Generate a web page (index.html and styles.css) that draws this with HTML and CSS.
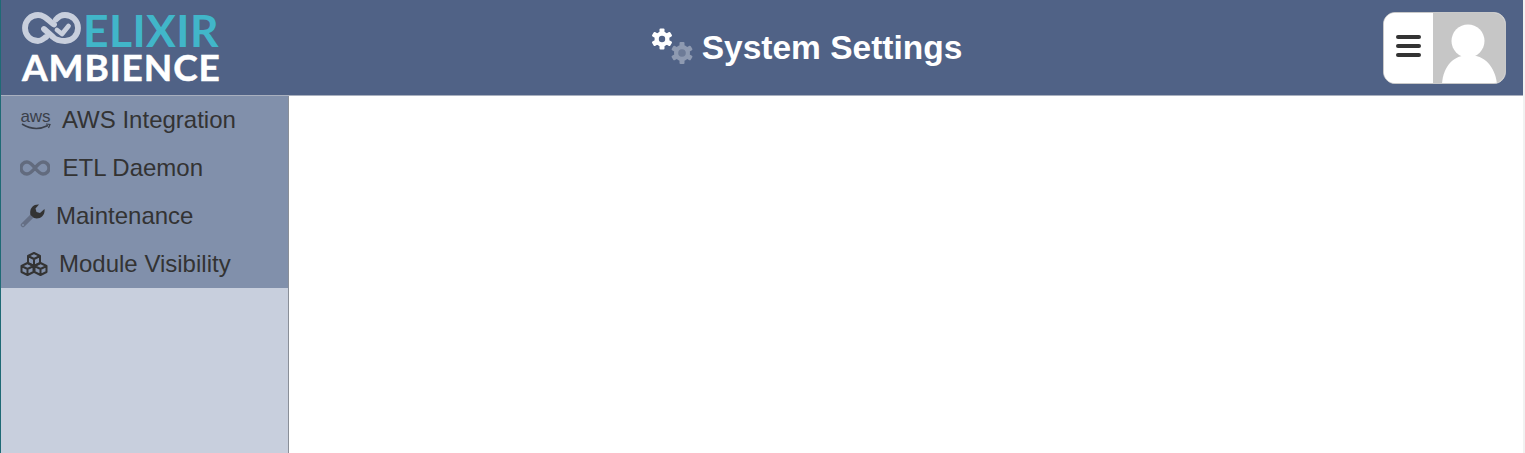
FILE: index.html
```html
<!DOCTYPE html>
<html lang="en">
<head>
<meta charset="utf-8">
<title>System Settings</title>
<link rel="stylesheet" href="styles.css">
</head>
<body>
<div class="app">
  <header class="topbar">
    <div class="logo">
      <div class="logo-top">
        <svg class="logo-mark" viewBox="7 4 60 36" width="60" height="36" aria-hidden="true">
          <g fill="none" stroke="#c8cfdd" stroke-width="5.800" stroke-linecap="round" stroke-linejoin="round">
            <path d="M31 29 C28 31 26 33 23 33 A13 13 0 0 1 23 7 C28 7 31 10 39 16.500"/>
            <path d="M29 21 L38 29 C41 32 44 33 50 33 A13 13 0 0 0 50 7 C46 7 43 9 41 11.500"/>
            <path d="M42 22 L47 26 L53.500 18" stroke-width="4.800"/>
          </g>
        </svg>
        <span class="logo-elixir">ELIXIR</span>
      </div>
      <div class="logo-ambience">AMBIENCE</div>
    </div>
    <h1 class="title">
      <svg class="gears" viewBox="0 0 44 36" width="44" height="36" aria-hidden="true">
        <g class="gear-white"><circle cx="11" cy="11" r="7.500"/><g class="teeth"><rect x="8.500" y="0.500" width="5" height="21" rx="1"/><rect x="8.500" y="0.500" width="5" height="21" rx="1" transform="rotate(60 11 11)"/><rect x="8.500" y="0.500" width="5" height="21" rx="1" transform="rotate(120 11 11)"/></g><circle class="hole-a" cx="11" cy="11" r="3.200"/></g>
        <g class="gear-grey"><circle cx="31" cy="25" r="8"/><g class="teeth"><rect x="28.500" y="14" width="5" height="22" rx="1"/><rect x="28.500" y="14" width="5" height="22" rx="1" transform="rotate(60 31 25)"/><rect x="28.500" y="14" width="5" height="22" rx="1" transform="rotate(120 31 25)"/></g><circle class="hole-b" cx="31" cy="25" r="3.800"/></g>
      </svg>
      <span>System Settings</span>
    </h1>
    <div class="user-box">
      <div class="menu-btn"><span class="bar"></span><span class="bar"></span><span class="bar"></span></div>
      <div class="avatar">
        <svg viewBox="0 0 73 70" width="73" height="70" aria-hidden="true">
          <circle cx="35" cy="28" r="16.500" fill="#fff"/>
          <path d="M9 71 C10 54 20 42 36 42 C52 42 62 54 64 71 Z" fill="#fff"/>
        </svg>
      </div>
    </div>
  </header>
  <div class="main">
    <aside class="sidebar">
      <nav class="nav">
        <a class="nav-item">
          <span class="aws-icon"><span class="aws-text">aws</span>
            <svg viewBox="0 0 30 8" width="30" height="8" aria-hidden="true"><path d="M1 1 Q14 9 27 2.500" fill="none" stroke="#3a3f4a" stroke-width="1.500"/><path d="M25 1 L29 1.500 L27.500 5" fill="none" stroke="#3a3f4a" stroke-width="1.200"/></svg>
          </span>
          <span class="label label-aws">AWS Integration</span>
        </a>
        <a class="nav-item">
          <svg class="icon-inf" viewBox="0 0 30 16" width="30" height="16" aria-hidden="true"><path d="M15 8 C11 3 9 2 7 2 A6 6 0 0 0 7 14 C9 14 11 13 15 8 C19 3 21 2 23 2 A6 6 0 0 1 23 14 C21 14 19 13 15 8 Z" fill="none" stroke="#626b7e" stroke-width="3.400"/></svg>
          <span class="label label-etl">ETL Daemon</span>
        </a>
        <a class="nav-item">
          <svg class="icon-wrench" viewBox="0 0 25 24" width="25" height="24" aria-hidden="true">
            <path d="M3 21 L12 12" stroke="#656f85" stroke-width="4.500" stroke-linecap="round"/>
            <circle cx="3" cy="21" r="1" fill="#8190ab"/>
            <path d="M10.500 11 C9 5 13 0 19 0.500 L15.500 4.500 L16.500 8 L20 9 L24.500 5 C25.500 11 20 16 14 14 Z" fill="#333"/>
          </svg>
          <span class="label label-maint">Maintenance</span>
        </a>
        <a class="nav-item">
          <svg class="icon-cubes" viewBox="0 0 28 24" width="28" height="24" aria-hidden="true">
            <g fill="none" stroke="#333" stroke-width="2" stroke-linejoin="round">
              <path d="M14 1 L20 4 L20 11 L14 14 L8 11 L8 4 Z M8 4 L14 7 L20 4 M14 7 L14 14"/>
              <path d="M7.500 11 L13.500 14 L13.500 20 L7.500 23 L1.500 20 L1.500 14 Z M1.500 14 L7.500 17 L13.500 14 M7.500 17 L7.500 23"/>
              <path d="M20.500 11 L26.500 14 L26.500 20 L20.500 23 L14.500 20 L14.500 14 Z M14.500 14 L20.500 17 L26.500 14 M20.500 17 L20.500 23"/>
            </g>
          </svg>
          <span class="label label-mod">Module Visibility</span>
        </a>
      </nav>
    </aside>
    <main class="content"></main>
  </div>
</div>
</body>
</html>
```
FILE: styles.css
```css
* { box-sizing: border-box; }
html, body { margin: 0; height: 100%; overflow: hidden; background: #fff; }
body { font-family: "Liberation Sans", Arial, sans-serif; color: #333; }
.app {
  height: 453px;
  display: flex;
  flex-direction: column;
  border-left: 1px solid #1f6a75;
  border-right: 2px solid #f1f1f1;
}
.topbar {
  height: 96px;
  flex: none;
  background: #506286;
  border-bottom: 1px solid #a9b0bf;
  display: grid;
  grid-template-columns: 1fr auto 1fr;
  align-items: center;
  padding: 0 17px 0 19px;
}
.logo { display: flex; flex-direction: column; font-family: Lato, sans-serif; font-weight: 700; }
.logo-top { display: flex; align-items: center; gap: 1px; height: 38px; margin-left: 2px; margin-top: -2px; }
.logo-mark { flex: none; margin-top: 1px; }
.logo-elixir { font-size: 44.5px; line-height: 38px; color: #41b6c9; letter-spacing: 0.4px; }
.logo-ambience { font-size: 37px; line-height: 32px; color: #fff; letter-spacing: 0.9px; margin-left: 2px; margin-top: 2px; -webkit-text-stroke: 0.5px #fff; }
.title {
  margin: 0 0 0 87px;
  display: flex;
  align-items: center;
  gap: 7px;
  font-size: 33.5px;
  line-height: 40px;
  font-weight: 700;
  color: #fff;
}
.gears { flex: none; margin-top: -4px; }
.gear-white { fill: #fff; }
.gear-grey { fill: #8e9ab1; }
.hole-a { fill: #506286; }
.hole-b { fill: #6d7b97; }
.user-box {
  justify-self: end;
  width: 123px;
  height: 72px;
  display: flex;
  border-radius: 12px;
  overflow: hidden;
  border: 1px solid #c9c9c9;
  background: #fff;
}
.menu-btn {
  width: 49px;
  flex: none;
  background: #fff;
  display: flex;
  flex-direction: column;
  justify-content: center;
  align-items: center;
  gap: 5.5px;
  padding-bottom: 3px;
}
.bar { width: 25px; height: 3.5px; border-radius: 2px; background: #333; }
.avatar { flex: 1; background: #c6c6c6; overflow: hidden; }
.avatar svg { display: block; }
.main { flex: 1; display: flex; min-height: 0; }
.sidebar {
  width: 288px;
  flex: none;
  background: #c8cfdd;
  border-right: 1px solid #8a8f98;
}
.nav { background: #8190ab; display: flex; flex-direction: column; }
.nav-item {
  height: 48px;
  display: flex;
  align-items: center;
  padding-left: 19px;
  font-size: 24px;
  color: #333;
}
.label { white-space: nowrap; }
.label-aws { margin-left: 11px; }
.label-etl { margin-left: 12.500px; }
.label-maint { margin-left: 11px; }
.label-mod { margin-left: 11px; }
.aws-icon { width: 31px; display: flex; flex-direction: column; align-items: center; line-height: 12px; }
.aws-text { font-size: 17px; line-height: 13px; color: #3a3f4a; }
.aws-icon svg { display: block; }
.icon-inf, .icon-wrench, .icon-cubes { flex: none; }
.content { flex: 1; background: #fff; }
```
